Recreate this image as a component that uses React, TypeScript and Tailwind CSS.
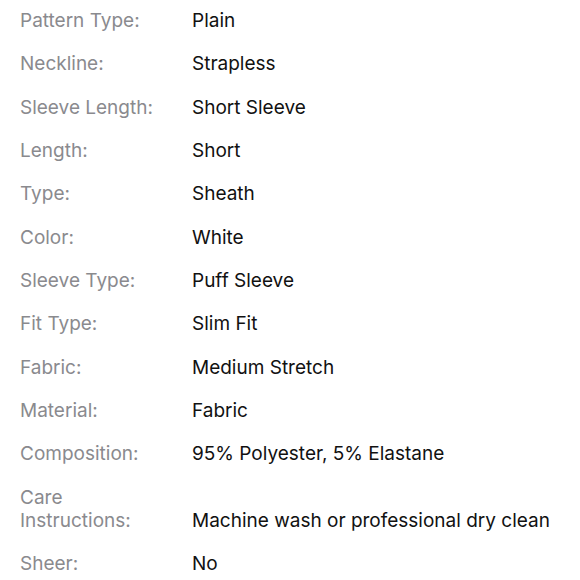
const SPECS: [string, string][] = [
  ["Pattern Type:", "Plain"],
  ["Neckline:", "Strapless"],
  ["Sleeve Length:", "Short Sleeve"],
  ["Length:", "Short"],
  ["Type:", "Sheath"],
  ["Color:", "White"],
  ["Sleeve Type:", "Puff Sleeve"],
  ["Fit Type:", "Slim Fit"],
  ["Fabric:", "Medium Stretch"],
  ["Material:", "Fabric"],
  ["Composition:", "95% Polyester, 5% Elastane"],
  ["Care Instructions:", "Machine wash or professional dry clean"],
  ["Sheer:", "No"],
]

export default function App() {
  return (
    <div className="w-[580px] h-[580px] bg-white overflow-hidden pt-[9px] pl-5 font-['Inter','Liberation_Sans',sans-serif] text-[19px] leading-[23px]">
      <div className="grid grid-cols-[150px_1fr] gap-x-[22px] gap-y-[20.33px] items-end">
        {SPECS.map(([label, value]) => (
          <div key={label} className="contents">
            <div className="text-[#8a8a8e]">{label}</div>
            <div className="text-[#111] whitespace-nowrap">{value}</div>
          </div>
        ))}
      </div>
    </div>
  )
}
